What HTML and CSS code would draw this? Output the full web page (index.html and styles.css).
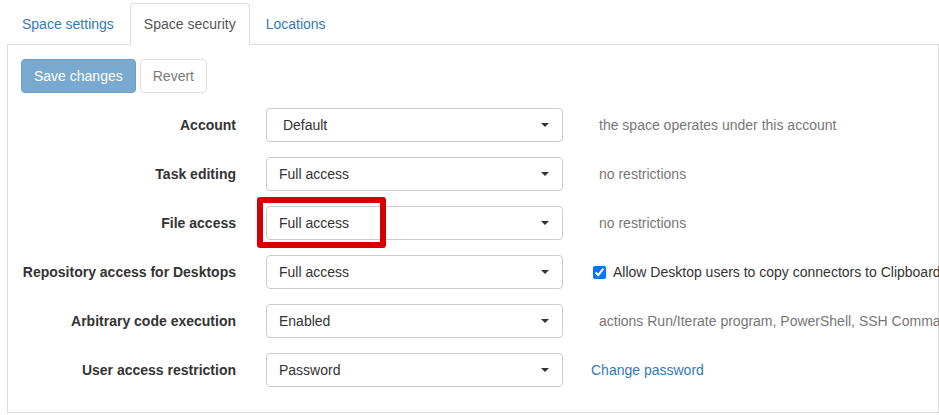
FILE: index.html
```html
<!DOCTYPE html>
<html>
<head>
<meta charset="utf-8">
<link rel="stylesheet" href="styles.css">
</head>
<body>
<div class="page">
  <ul class="tabs">
    <li class="tab"><a>Space settings</a></li>
    <li class="tab active"><a>Space security</a></li>
    <li class="tab"><a>Locations</a></li>
  </ul>
  <div class="panel">
    <div class="toolbar">
      <button class="btn btn-primary">Save changes</button>
      <button class="btn btn-default">Revert</button>
    </div>
    <div class="form">
      <div class="row">
        <label class="lbl">Account</label>
        <div class="select"><span>&nbsp;Default</span><i class="caret"></i></div>
        <div class="help">the space operates under this account</div>
      </div>
      <div class="row">
        <label class="lbl">Task editing</label>
        <div class="select"><span>Full access</span><i class="caret"></i></div>
        <div class="help">no restrictions</div>
      </div>
      <div class="row">
        <label class="lbl">File access</label>
        <div class="select"><span>Full access</span><i class="caret"></i><div class="highlight"></div></div>
        <div class="help">no restrictions</div>
      </div>
      <div class="row">
        <label class="lbl">Repository access for Desktops</label>
        <div class="select"><span>Full access</span><i class="caret"></i></div>
        <label class="check"><input type="checkbox" checked> Allow Desktop users to copy connectors to Clipboard</label>
      </div>
      <div class="row">
        <label class="lbl">Arbitrary code execution</label>
        <div class="select"><span>Enabled</span><i class="caret"></i></div>
        <div class="help clip">actions Run/Iterate program, PowerShell, SSH Commands</div>
      </div>
      <div class="row last">
        <label class="lbl">User access restriction</label>
        <div class="select"><span>Password</span><i class="caret"></i></div>
        <a class="link">Change password</a>
      </div>
    </div>
  </div>
</div>
</body>
</html>
```

FILE: styles.css
```css
html, body {
  margin: 0;
  padding: 0;
  background: #fff;
  overflow: hidden;
}
body {
  font-family: "Liberation Sans", Arial, sans-serif;
  font-size: 14px;
  line-height: 20px;
  color: #333;
  width: 939px;
  height: 415px;
}
.page {
  padding: 3px 0 0 7px;
}
.tabs {
  list-style: none;
  margin: 0;
  padding: 0 0 0 1px;
  display: flex;
  border-bottom: 1px solid #ddd;
  height: 41px;
}
.tab {
  margin-right: 2px;
  margin-bottom: -1px;
}
.tab a {
  display: block;
  padding: 10px 13px;
  line-height: 20px;
  border: 1px solid transparent;
  border-radius: 4px 4px 0 0;
  color: #337ab7;
  white-space: nowrap;
}
.tab.active a {
  color: #555;
  background: #fff;
  border-color: #ddd #ddd transparent #ddd;
}
.panel {
  border: 1px solid #ddd;
  border-top: none;
  height: 368px;
  padding: 14px 0 0 13px;
  box-sizing: border-box;
}
.toolbar {
  display: flex;
  gap: 4px;
  margin-bottom: 15px;
}
.btn {
  font-family: inherit;
  font-size: 14px;
  line-height: 20px;
  padding: 6px 12px;
  border: 1px solid transparent;
  border-radius: 4px;
  height: 34px;
  box-sizing: border-box;
  cursor: default;
}
.btn-primary {
  background: #7aa9d0;
  border-color: #6f9dc9;
  color: #fff;
}
.btn-default {
  background: #fff;
  border-color: #e0e0e0;
  color: #7a7a7a;
}
.form {
  display: flex;
  flex-direction: column;
  gap: 15px;
}
.row {
  display: flex;
  align-items: center;
  height: 34px;
}
.lbl {
  width: 215px;
  text-align: right;
  font-weight: bold;
  white-space: nowrap;
  flex: none;
}
.select {
  margin-left: 30px;
  width: 297px;
  height: 34px;
  box-sizing: border-box;
  border: 1px solid #ccc;
  border-radius: 4px;
  padding: 0 13px 0 12px;
  display: flex;
  align-items: center;
  justify-content: space-between;
  color: #333;
  flex: none;
  position: relative;
}
.caret {
  display: block;
  width: 0;
  height: 0;
  border-top: 4px solid #333;
  border-left: 4px solid transparent;
  border-right: 4px solid transparent;
}
.highlight {
  position: absolute;
  left: -10px;
  top: -10px;
  width: 129px;
  height: 51px;
  box-sizing: border-box;
  border: 6px solid #d40000;
  border-radius: 3px;
}
.help {
  margin-left: 36px;
  color: #777;
  white-space: nowrap;
}
.check {
  margin-left: 30px;
  display: flex;
  align-items: center;
  white-space: nowrap;
  color: #333;
}
.check input {
  margin: 0 7px 0 0;
  width: 13px;
  height: 13px;
}
.link {
  margin-left: 28px;
  color: #337ab7;
  white-space: nowrap;
}
```
